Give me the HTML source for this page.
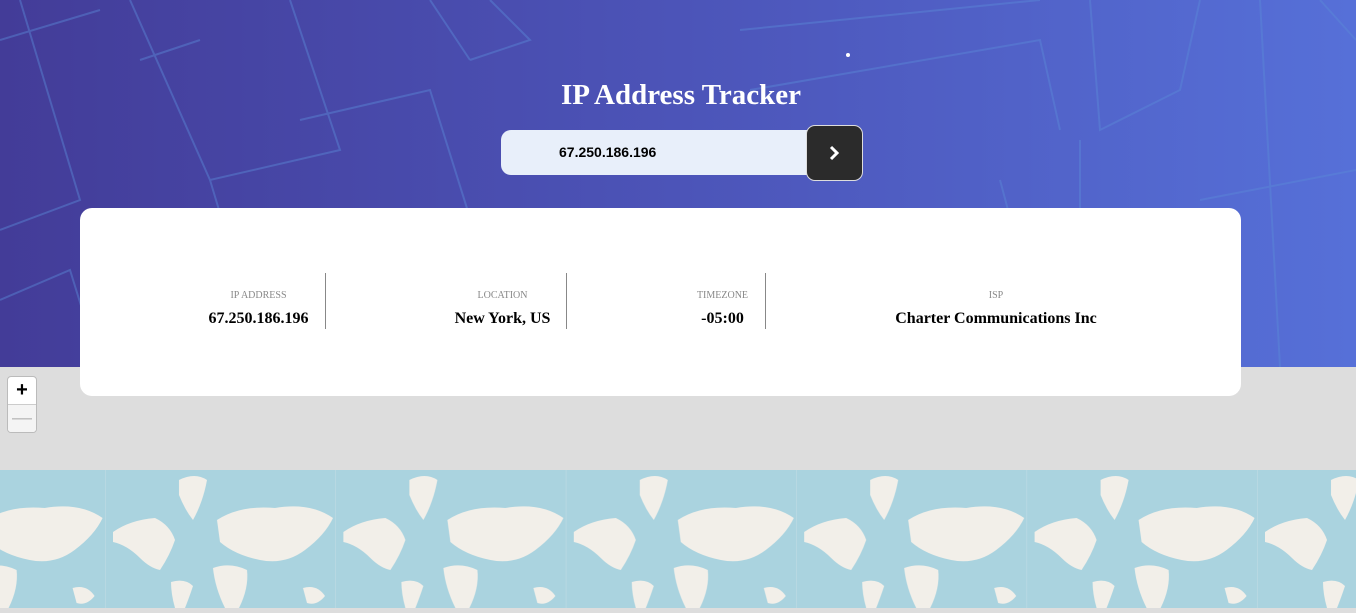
<!DOCTYPE html>
<html><head><style>
body{margin:0;width:1356px;height:608px;overflow:hidden;position:relative;font-family:"Liberation Serif",serif;background:#dddddd}
.hdr{position:absolute;left:0;top:0;width:1356px;height:367px;background:linear-gradient(90deg,#433c98,#4c54b8 50%,#5670d8)}
h1{position:absolute;top:79px;left:0;width:1362px;text-align:center;margin:0;color:#fff;font-size:29px;font-weight:bold}
.inp{position:absolute;left:501px;top:130px;width:320px;height:45px;background:#e8effa;border-radius:10px 0 0 10px;font-family:"Liberation Sans",sans-serif;font-weight:bold;font-size:14px;line-height:45px;box-sizing:border-box;padding-left:58px}
.btn{position:absolute;left:806px;top:125px;width:55px;height:54px;background:#2b2b2b;border:1px solid #ddd;border-radius:9px}
.card{position:absolute;left:80px;top:208px;width:1161px;height:188px;background:#fff;border-radius:12px}
.it{position:absolute;top:65px;height:56px;text-align:center}
.it .l{font-size:10px;color:#888;margin-top:17px;text-transform:uppercase}
.it .v{font-size:16px;font-weight:bold;margin-top:9px}
.sep{position:absolute;top:65px;width:1px;height:56px;background:#888}
.zoom{position:absolute;left:7px;top:376px;width:28px;height:55px;border:1px solid #bbb;border-radius:4px;background:#fff;font-family:"Liberation Sans",sans-serif;overflow:hidden}
.zoom div{height:27px;text-align:center;line-height:27px;font-size:20px}
.map{position:absolute;left:0;top:470px;width:1356px;height:138px;background:#aad3df}
</style></head><body>
<div class="hdr">
<svg width="1356" height="367" style="position:absolute;left:0;top:0" fill="none" stroke="#5b8ad6" stroke-opacity=".45" stroke-width="2">
<path d="M0 40 L100 10 M20 0 L80 200 L0 230 M130 0 L210 180 L340 150 L290 0 M140 60 L200 40 M0 300 L70 270 L100 367 M300 120 L430 90 L480 250 L340 290 L360 367 M210 180 L240 280 M430 0 L470 60 M490 0 L530 40 L470 60 M1090 0 L1100 130 L1180 90 L1200 0 M1260 0 L1280 367 M1320 0 L1356 40 M740 30 L1040 0 M750 90 L1040 40 L1060 130 M1080 140 L1080 367 M1200 200 L1356 170 M1000 180 L1050 367"/>
</svg>
<div style="position:absolute;left:846px;top:53px;width:4px;height:4px;border-radius:2px;background:#fff"></div>
</div>
<h1>IP Address Tracker</h1>
<div class="inp">67.250.186.196</div>
<div class="btn"><svg width="55" height="54"><path d="M24 21 L30 27 L24 33" stroke="#fff" stroke-width="3" fill="none"/></svg></div>
<div class="card">
<div class="it" style="left:120px;width:117px"><div class="l">IP Address</div><div class="v">67.250.186.196</div></div>
<div class="sep" style="left:245px"></div>
<div class="it" style="left:360px;width:125px"><div class="l">Location</div><div class="v">New York, US</div></div>
<div class="sep" style="left:486px"></div>
<div class="it" style="left:600px;width:85px"><div class="l">Timezone</div><div class="v">-05:00</div></div>
<div class="sep" style="left:685px"></div>
<div class="it" style="left:800px;width:232px"><div class="l">ISP</div><div class="v">Charter Communications Inc</div></div>
</div>
<div class="zoom"><div style="border-bottom:1px solid #ccc;font-weight:bold">+</div><div style="color:#bbb;background:#f4f4f4">&#8212;</div></div>
<div class="map">
<svg width="1356" height="138">
<defs><pattern id="p" x="105" y="0" width="230.4" height="138" patternUnits="userSpaceOnUse">
<line x1="0" y1="0" x2="0" y2="138" stroke="#c4dde5"/>
<g fill="#f2efe9">
<path d="M8 62 Q25 50 50 48 Q65 55 70 70 Q65 85 55 100 Q45 98 35 88 Q22 75 8 72 Z"/>
<path d="M74 10 Q90 2 102 10 Q98 32 88 50 Q80 40 74 25 Z"/>
<path d="M112 50 Q135 35 170 38 Q205 32 228 48 Q220 65 200 80 Q180 95 155 90 Q130 85 115 72 Z"/>
<path d="M108 98 Q125 92 142 100 Q144 118 134 138 L120 138 Q110 118 108 98 Z"/>
<path d="M66 112 Q80 108 88 116 Q84 128 80 138 L70 138 Q66 124 66 112 Z"/>
<path d="M198 118 Q212 114 220 126 Q212 136 202 133 Z"/>
</g></pattern></defs>
<rect width="1356" height="138" fill="url(#p)"/>
</svg>
</div>
</body></html>
